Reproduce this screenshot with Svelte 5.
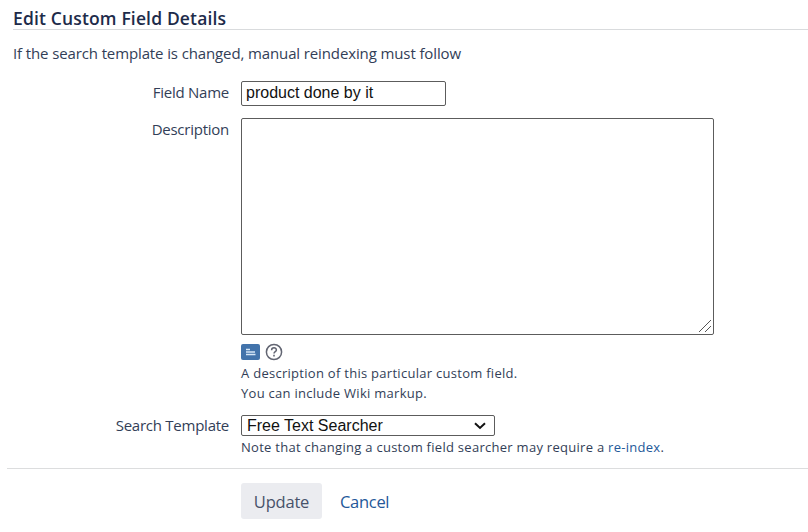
<script lang="ts">
    let fieldName = $state("product done by it");
    let description = $state("");
    let searcher = $state("text");

    const searchers = [{ value: "text", label: "Free Text Searcher" }];
</script>

<main class="page">
    <h2>Edit Custom Field Details</h2>
    <p class="intro">If the search template is changed, manual reindexing must follow</p>

    <form onsubmit={(e) => e.preventDefault()}>
        <div class="field-row name-row">
            <label for="name">Field Name</label>
            <input id="name" type="text" bind:value={fieldName} />
        </div>

        <div class="field-row description-row">
            <label for="description">Description</label>
            <div class="control">
                <div class="textarea-wrap">
                    <textarea id="description" bind:value={description}></textarea>
                    <svg class="grip" width="14" height="14" viewBox="0 0 14 14">
                        <path d="M1 13 13 1M7 13l6-6" />
                    </svg>
                </div>
                <div class="tools">
                    <svg width="19" height="16" viewBox="0 0 19 16">
                        <rect width="19" height="16" rx="2" fill="#4273ab" />
                        <path d="M5 5.5h4M5 8h9M5 10.5h9.5" stroke="#d5e6f7" stroke-width="1.3" />
                    </svg>
                    <svg width="18" height="18" viewBox="0 0 18 18" fill="none" stroke="#626572">
                        <circle cx="9" cy="9" r="7.6" stroke-width="1.5" />
                        <path d="M6.6 7.2C6.6 4 11.4 4 11.4 7c0 1.7-2.4 1.7-2.4 3.5" stroke-width="1.5" />
                        <path d="M9 11.8v1.6" stroke-width="1.6" />
                    </svg>
                </div>
                <p class="hint first">A description of this particular custom field.</p>
                <p class="hint second">You can include Wiki markup.</p>
            </div>
        </div>

        <div class="field-row search-row">
            <label for="searcher">Search Template</label>
            <div class="control">
                <div class="select-wrap">
                    <select id="searcher" bind:value={searcher}>
                        {#each searchers as item}
                            <option value={item.value}>{item.label}</option>
                        {/each}
                    </select>
                    <svg class="chevron" width="12" height="8" viewBox="0 0 12 8">
                        <path d="M1 1.3l5 4.7 5-4.7" />
                    </svg>
                </div>
                <p class="hint note">Note that changing a custom field searcher may require a <a href="#reindex">re-index</a>.</p>
            </div>
        </div>

        <div class="buttons">
            <button type="submit">Update</button>
            <a class="cancel" href="#cancel">Cancel</a>
        </div>
    </form>
</main>

<style>
    :global(body) {
        margin: 0;
        background: #fff;
    }

    .page {
        box-sizing: border-box;
        height: 532px;
        padding: 8px 0 0 7px;
        overflow: hidden;
        font-family: "Open Sans", "Noto Sans", sans-serif;
        font-size: 15px;
        line-height: 20px;
        color: #323e57;
    }

    h2 {
        margin: 0 0 0 6px;
        height: 21px;
        border-bottom: 1px solid #d9dbdd;
        font-size: 17.5px;
        font-weight: 600;
        letter-spacing: 0.15px;
        line-height: 20px;
        color: #1d2b4a;
        white-space: nowrap;
    }

    p {
        margin: 0;
        white-space: nowrap;
    }

    .intro {
        margin: 13px 0 0 6px;
        letter-spacing: -0.12px;
    }

    .field-row {
        display: grid;
        grid-template-columns: 222px 1fr;
        column-gap: 12px;
        align-items: start;
    }

    .name-row {
        margin-top: 18px;
    }

    label {
        padding-top: 1px;
        letter-spacing: -0.25px;
        text-align: right;
        white-space: nowrap;
    }

    input,
    textarea,
    select {
        box-sizing: border-box;
        display: block;
        margin: 0;
        border: 1px solid #5c5c5c;
        border-radius: 2px;
        outline: none;
        background: #fff;
        font-family: "Liberation Sans", Arial, sans-serif;
        font-size: 16px;
        color: #111;
    }

    input {
        width: 205px;
        height: 25px;
        padding: 0 4px 1px;
    }

    .description-row {
        margin-top: 12px;
    }

    .textarea-wrap {
        position: relative;
        width: 473px;
    }

    textarea {
        width: 473px;
        height: 217px;
        resize: none;
    }

    .grip {
        position: absolute;
        right: 2px;
        bottom: 2px;
        fill: none;
        stroke: #555;
        stroke-width: 1;
    }

    .tools {
        display: flex;
        align-items: center;
        gap: 5px;
        height: 18px;
        margin-top: 8px;
    }

    .hint {
        font-size: 13px;
        letter-spacing: 0.28px;
    }

    .first {
        margin-top: 2px;
    }

    .search-row {
        margin-top: 12px;
    }

    .search-row label {
        padding-top: 0;
    }

    .select-wrap {
        position: relative;
        width: 254px;
    }

    select {
        width: 254px;
        height: 21px;
        padding: 0 5px;
        appearance: none;
        line-height: 19px;
    }

    .chevron {
        position: absolute;
        top: 7px;
        right: 9px;
        fill: none;
        stroke: #111;
        stroke-width: 2;
        pointer-events: none;
    }

    .note {
        margin-top: 1px;
    }

    a {
        color: #245899;
        text-decoration: none;
    }

    .buttons {
        display: flex;
        align-items: center;
        gap: 17px;
        margin-top: 11px;
        padding: 14px 0 0 234px;
        border-top: 1px solid #dcddde;
    }

    button {
        width: 81px;
        height: 36px;
        padding: 0;
        border: 0;
        border-radius: 3px;
        background: #ebecf0;
        font-family: inherit;
        font-size: 16.5px;
        letter-spacing: -0.2px;
        color: #47526a;
    }

    .cancel {
        padding: 2px 0 0 1px;
        font-size: 16.5px;
        letter-spacing: -0.3px;
    }
</style>
